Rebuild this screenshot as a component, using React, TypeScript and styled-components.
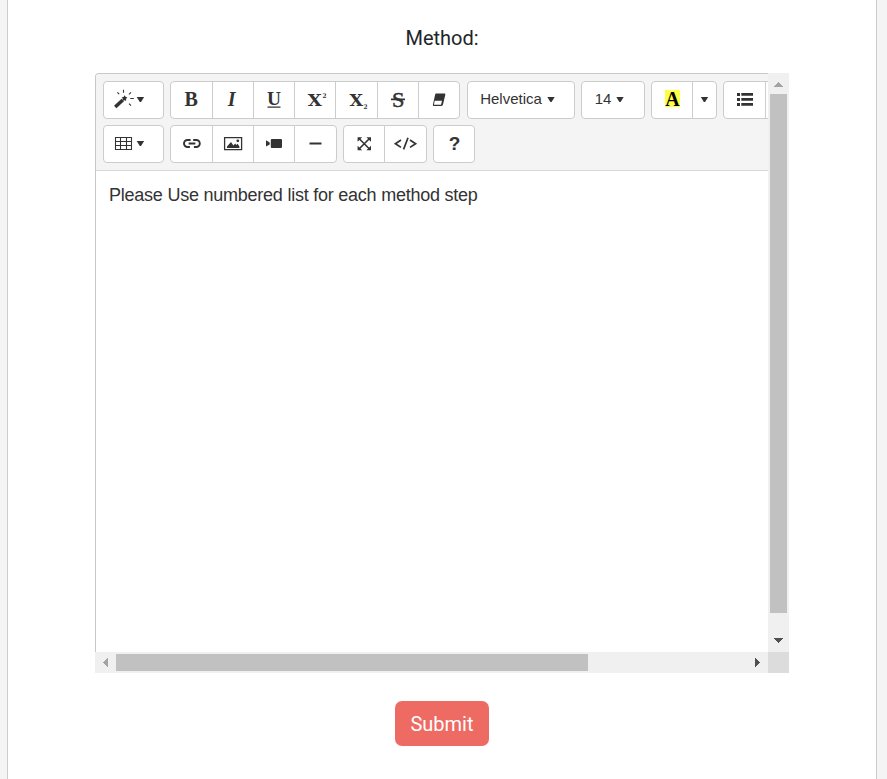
import React from "react";
import styled, { createGlobalStyle } from "styled-components";

const GlobalStyle = createGlobalStyle`
  * { box-sizing: border-box; }
  body { margin: 0; background: #f4f4f4; overflow: hidden; }
`;

const Page = styled.main`
  width: 870px;
  height: 779px;
  margin-left: 7px;
  padding-top: 24px;
  background: #fff;
  border: solid #ccc;
  border-width: 0 1px;
  display: flex;
  flex-direction: column;
  align-items: center;
  font-family: Roboto, sans-serif;
`;

const Label = styled.label`
  height: 49px;
  font-size: 20px;
  line-height: 28px;
  color: #212529;
`;

const Editor = styled.section`
  width: 694px;
  height: 600px;
  display: grid;
  grid-template-columns: 673px 21px;
  grid-template-rows: 579px 21px;
`;

const Frame = styled.div`
  overflow: hidden;
  display: flex;
  flex-direction: column;
  border: solid #c8c8c8;
  border-width: 1px 0 0 1px;
  border-top-left-radius: 4px;
`;

const Toolbar = styled.div`
  height: 97px;
  padding: 7px 0 0 7px;
  background: #f4f4f4;
  border-bottom: 1px solid #d8d8d8;
  display: flex;
  flex-direction: column;
  gap: 6px;
  flex: none;
`;

const ToolRow = styled.div`
  display: flex;
  height: 38px;
`;

const Group = styled.div<{ $gap?: number }>`
  display: flex;
  flex: none;
  margin-right: ${(p) => p.$gap ?? 6}px;
`;

const Tool = styled.button<{ $w: number }>`
  width: ${(p) => p.$w}px;
  height: 38px;
  flex: none;
  padding: 0;
  display: flex;
  align-items: center;
  justify-content: center;
  background: #fff;
  color: #333;
  border: 1px solid #ccc;
  font: 15px/20px "Liberation Sans", Arial, sans-serif;
  & + & { margin-left: -1px; }
  &:first-child { border-top-left-radius: 4px; border-bottom-left-radius: 4px; }
  &:last-child { border-top-right-radius: 4px; border-bottom-right-radius: 4px; }
`;

const SelectTool = styled(Tool)`
  padding-right: 7px;
`;

const Drawing = styled.svg`
  display: block;
  flex: none;
  fill: #333;
`;

const Caption = styled.span`
  margin: -2px 5px 0 0;
`;

const Content = styled.div`
  flex: 1;
  padding: 13px;
  font: 18px/22px "Liberation Sans", Arial, sans-serif;
  letter-spacing: -0.235px;
  color: #333;
`;

const VerticalBar = styled.div`
  background: #f0f0f0;
  display: grid;
  grid-template-rows: 21px 519px 25px 14px;
  justify-items: center;
`;

const HorizontalBar = styled.div`
  background: #f0f0f0;
  display: grid;
  grid-template-columns: 21px 472px 1fr 21px;
  align-items: center;
`;

const VerticalThumb = styled.div`
  width: 17px;
  height: 519px;
  background: #c1c1c1;
`;

const HorizontalThumb = styled.div`
  height: 17px;
  background: #c1c1c1;
`;

const Corner = styled.div`
  background: #dcdcdc;
`;

const Submit = styled.button`
  width: 94px;
  height: 45px;
  margin-top: 28px;
  padding: 1px 0 0;
  border: 0;
  border-radius: 7px;
  background: #ee6b63;
  color: #fff;
  font: 20px/28px Roboto, sans-serif;
`;

type DrawProps = { w: number; children: React.ReactNode };

/* Fills the inside of a button, so drawings sit on its pixel grid. */
const Face = ({ w, children }: DrawProps) => (
  <Drawing width={w - 2} height={36} viewBox={`1 1 ${w - 2} 36`}>
    {children}
  </Drawing>
);

const IconTool = ({ w, label, children }: DrawProps & { label: string }) => (
  <Tool $w={w} aria-label={label}>
    <Face w={w}>{children}</Face>
  </Tool>
);

const SERIF = '"Liberation Serif", serif';
const SLAB = '"DejaVu Serif", serif';

const caret = (x: number) => <path d={`M${x} 16h7.4l-3.1 5h-1.2z`} />;

const Caret = () => (
  <Drawing width="8" height="6">
    <path d="M0.3 0h7.4l-3.1 5H3.4z" />
  </Drawing>
);

const ScrollArrow = ({ d, dark }: { d: string; dark?: boolean }) => (
  <svg width="21" height="21" viewBox="0 0 21 21" shapeRendering="crispEdges">
    <path d={d} fill={dark ? "#505050" : "#a3a3a3"} />
  </svg>
);

export default function App() {
  return (
    <>
      <GlobalStyle />
      <Page>
        <Label>Method:</Label>
        <Editor>
          <Frame>
            <Toolbar>
              <ToolRow>
                <Group>
                  <IconTool w={61} label="Style">
                    <path d="M12.2 26l7.6-7" stroke="#333" strokeWidth="3.6" />
                    <path d="M21.6 14.2l.9 1.6 1.8.8-1.3 1.4.2 1.9-1.8-.7-1.9.6.3-2-1.1-1.5 1.9-.4z" />
                    <path
                      d="M14.4 11.4l1.8 1.8M20.5 8.8v3M28 11.3l-2 2M27.3 17.5h3.5M26 22.6l2 2"
                      stroke="#333"
                      strokeWidth="1.1"
                    />
                    {caret(33.7)}
                  </IconTool>
                </Group>
                <Group $gap={7}>
                  <IconTool w={43} label="Bold">
                    <text x="14.6" y="25" fontFamily={SERIF} fontSize="20" fontWeight="700">B</text>
                  </IconTool>
                  <IconTool w={42} label="Italic">
                    <text x="15.8" y="25" fontFamily={SERIF} fontSize="20" fontWeight="700" fontStyle="italic">I</text>
                  </IconTool>
                  <IconTool w={42} label="Underline">
                    <text x="14" y="23.5" fontFamily={SERIF} fontSize="18" fontWeight="700" textLength="14" lengthAdjust="spacingAndGlyphs">U</text>
                    <path d="M14.5 25.5h13v1.2h-13z" />
                  </IconTool>
                  <IconTool w={42} label="Superscript">
                    <text x="13.7" y="25" fontFamily={SLAB} fontSize="17" fontWeight="700" textLength="14" lengthAdjust="spacingAndGlyphs">X</text>
                    <text x="28.6" y="17" fontFamily={SLAB} fontSize="6.5" fontWeight="700" textLength="4" lengthAdjust="spacingAndGlyphs">2</text>
                  </IconTool>
                  <IconTool w={43} label="Subscript">
                    <text x="14.5" y="25" fontFamily={SLAB} fontSize="17" fontWeight="700" textLength="13.5" lengthAdjust="spacingAndGlyphs">X</text>
                    <text x="28.6" y="27.5" fontFamily={SLAB} fontSize="6.5" fontWeight="700" textLength="4" lengthAdjust="spacingAndGlyphs">2</text>
                  </IconTool>
                  <IconTool w={42} label="Strikethrough">
                    <text x="15" y="25.6" fontFamily={SERIF} fontSize="22" textLength="12.5" lengthAdjust="spacingAndGlyphs" stroke="#333" strokeWidth="0.5">S</text>
                    <path d="M14 17.5h14v1.8H14z" />
                  </IconTool>
                  <IconTool w={42} label="Clear formatting">
                    <path fillRule="evenodd" d="M18.2 12.6h8.3q1.1 0 .8 1.2L25 23.6q-.3 1.4-1.7 1.4h-7.4q-1.4 0-1-1.2l2.2-10q.2-1.2 1.1-1.2zM16.7 19.8l-.8 4h7.1l1-4z" />
                  </IconTool>
                </Group>
                <Group>
                  <SelectTool $w={108}>
                    <Caption>Helvetica</Caption>
                    <Caret />
                  </SelectTool>
                </Group>
                <Group>
                  <SelectTool $w={64}>
                    <Caption>14</Caption>
                    <Caret />
                  </SelectTool>
                </Group>
                <Group>
                  <IconTool w={42} label="Text color">
                    <path d="M14 9h15v17H14z" fill="#ffff42" />
                    <text x="14.2" y="25" fontFamily={SERIF} fontSize="20" fontWeight="700" fill="#000">A</text>
                  </IconTool>
                  <IconTool w={25} label="More colors">{caret(8.8)}</IconTool>
                </Group>
                <Group>
                  <IconTool w={43} label="Unordered list">
                    <path d="M14 12h3v3h-3zM14 17h3v3h-3zM14 22h3v3h-3zM18.3 12H30v2.8H18.3zM18.3 17H30v2.8H18.3zM18.3 22H30v2.8H18.3z" />
                  </IconTool>
                  <IconTool w={42} label="Ordered list">
                    <path d="M14 12h14v2H14z" />
                  </IconTool>
                </Group>
              </ToolRow>
              <ToolRow>
                <Group>
                  <IconTool w={61} label="Table">
                    <path
                      d="M12.5 12.5h16v12h-16zM12.5 16.5h16M12.5 20.5h16M17.5 12.5v12M23.5 12.5v12"
                      fill="none"
                      stroke="#333"
                      strokeWidth="1.1"
                    />
                    {caret(33.7)}
                  </IconTool>
                </Group>
                <Group>
                  <IconTool w={43} label="Link">
                    <path
                      d="M20.6 15h-3.1a3.5 3.5 0 0 0 0 7h2.4M23.2 15h3.1a3.5 3.5 0 0 1 0 7h-2.4M18.6 18.5h6.8"
                      fill="none"
                      stroke="#333"
                      strokeWidth="1.9"
                    />
                  </IconTool>
                  <IconTool w={42} label="Picture">
                    <path d="M12.6 12.6h17v12h-17z" fill="none" stroke="#333" strokeWidth="1.3" />
                    <path d="M15 23v-1.5l4-4.6 2.4 3.5 1.7-2 1.2 1.6 1.3-1.2 1.8 2.7V23z" />
                    <circle cx="25.8" cy="15.8" r="1.4" />
                  </IconTool>
                  <IconTool w={42} label="Video">
                    <path d="M13 15.2l3.7 2.2v2.2L13 21.6zM18.8 14h9.2q1 0 1 1v7q0 1-1 1h-9.2q-1 0-1-1v-7q0-1 1-1z" />
                  </IconTool>
                  <IconTool w={43} label="Horizontal rule">
                    <path d="M15.5 17.6h12v1.9h-12z" />
                  </IconTool>
                </Group>
                <Group>
                  <IconTool w={42} label="Full screen">
                    <path d="M16 13.5l10.5 10.5M26.5 13.5L16 24" stroke="#333" strokeWidth="1.6" />
                    <path d="M14.6 12.2h4.6l-4.6 4.6zM28 12.2h-4.6l4.6 4.6zM14.6 25.3h4.6l-4.6-4.6zM28 25.3h-4.6l4.6-4.6z" />
                  </IconTool>
                  <IconTool w={43} label="Code view">
                    <path
                      d="M17 15l-5.6 3.7 5.6 3.7M26 15l5.6 3.7-5.6 3.7M24 12.8l-4.4 11.6"
                      fill="none"
                      stroke="#333"
                      strokeWidth="1.7"
                    />
                  </IconTool>
                </Group>
                <Group>
                  <IconTool w={42} label="Help">
                    <text x="15.7" y="25" fontFamily='"Liberation Sans", sans-serif' fontSize="19" fontWeight="700">?</text>
                  </IconTool>
                </Group>
              </ToolRow>
            </Toolbar>
            <Content>Please Use numbered list for each method step</Content>
          </Frame>
          <VerticalBar>
            <ScrollArrow d="M6 14h9v-1h-1v-1h-1v-1h-1v-1h-1V9h-1v1H9v1H8v1H7v1H6z" />
            <VerticalThumb />
            <span />
            <ScrollArrow dark d="M6 0h9v1h-1v1h-1v1h-1v1h-1v1h-1V4H9V3H8V2H7V1H6z" />
          </VerticalBar>
          <HorizontalBar>
            <ScrollArrow d="M13 6v9h-1v-1h-1v-1h-1v-1H9v-1H8v-1h1V9h1V8h1V7h1V6z" />
            <HorizontalThumb />
            <span />
            <ScrollArrow dark d="M8 6v9h1v-1h1v-1h1v-1h1v-1h1v-1h-1V9h-1V8h-1V7H9V6z" />
          </HorizontalBar>
          <Corner />
        </Editor>
        <Submit>Submit</Submit>
      </Page>
    </>
  );
}
